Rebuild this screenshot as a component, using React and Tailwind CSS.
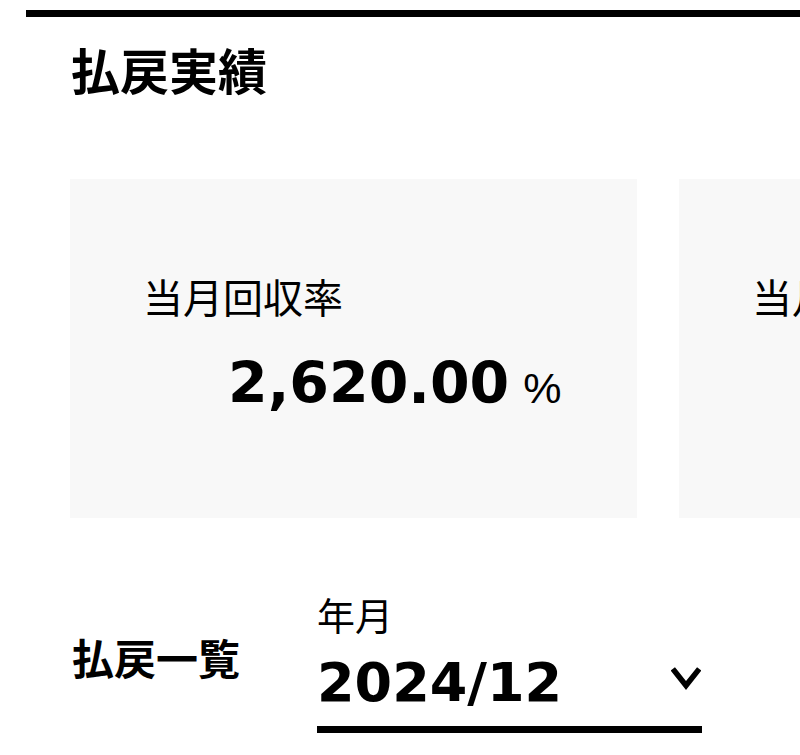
import React from 'react'

const jp = "font-['Liberation_Sans','Noto_Sans_CJK_JP',sans-serif]"
const num = "font-['DejaVu_Sans','Noto_Sans_CJK_JP',sans-serif]"

const stats = [
  { label: '当月回収率', value: '2,620.00', unit: '%' },
  { label: '当月払戻金額', value: '52,400', unit: '円' },
]

function StatCard({ label, value, unit }) {
  return (
    <div className="w-[567px] h-[339px] shrink-0 bg-[#f8f8f8] pl-[73px] pt-[100px] overflow-hidden">
      <p className={`${jp} text-[40px] leading-none text-black whitespace-nowrap`}>{label}</p>
      <div className="flex items-baseline mt-[36px] ml-[85px] whitespace-nowrap">
        <span className={`${num} text-[57px] leading-none font-bold text-black`}>{value}</span>
        <span className={`${jp} text-[43px] leading-none text-black ml-[14px]`}>{unit}</span>
      </div>
    </div>
  )
}

export default function App() {
  return (
    <div className="w-[800px] h-[755px] bg-white overflow-hidden">
      <div className="ml-[26px] mt-[10px] h-[7px] bg-black" />

      {/* 払戻実績 */}
      <h1 className={`${jp} text-[49px] leading-none font-bold text-black ml-[71px] mt-[32px]`}>払戻実績</h1>

      <div className="flex gap-[42px] ml-[70px] mt-[81px]">
        {stats.map((s) => (
          <StatCard key={s.label} {...s} />
        ))}
      </div>

      {/* 払戻一覧 */}
      <div className="flex items-start ml-[72px] mt-[80px]">
        <h2 className={`${jp} text-[42px] leading-none font-bold text-black mt-[42px] w-[245px]`}>払戻一覧</h2>
        <div className="w-[385px] border-b-[7px] border-black pb-[16px]">
          <p className={`${jp} text-[38px] leading-none text-black`}>年月</p>
          <div className="flex items-start justify-between mt-[20px]">
            <span className={`${num} text-[54px] leading-none font-bold text-black`}>2024/12</span>
            <svg className="mt-[11px] mr-[1px]" width="30" height="24" viewBox="0 0 30 24" fill="none">
              <polyline points="3.5,4 15,18.5 26.5,4" stroke="black" strokeWidth="5.5" strokeLinecap="square" strokeLinejoin="miter" />
            </svg>
          </div>
        </div>
      </div>
    </div>
  )
}
